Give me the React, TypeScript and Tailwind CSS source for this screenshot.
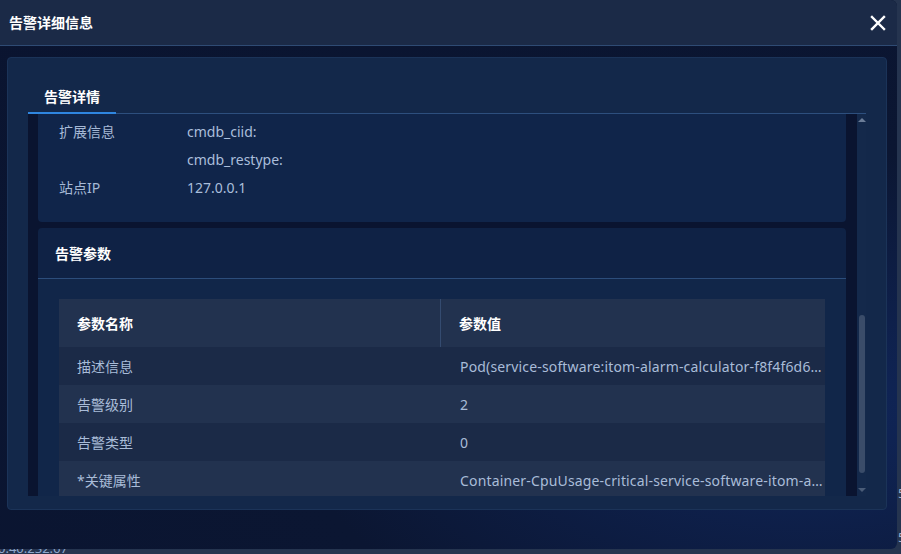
import React from 'react';

const font = { fontFamily: '"Noto Sans", "Noto Sans CJK SC", sans-serif' };

const extRows = [
  { label: '扩展信息', value: 'cmdb_ciid:' },
  { label: '', value: 'cmdb_restype:' },
  { label: '站点IP', value: '127.0.0.1' },
];

const params = [
  { name: '描述信息', value: 'Pod(service-software:itom-alarm-calculator-f8f4f6d6c-7xk2p) CPU usage is too high' },
  { name: '告警级别', value: '2' },
  { name: '告警类型', value: '0' },
  { name: '*关键属性', value: 'Container-CpuUsage-critical-service-software-itom-alarm-calculator' },
  { name: '告警对象', value: 'itom-alarm-calculator' },
];

function CloseIcon() {
  return (
    <svg width="16" height="16" viewBox="0 0 16 16" className="text-white">
      <path d="M2 2 14 14M14 2 2 14" stroke="currentColor" strokeWidth="2.4" strokeLinecap="square" />
    </svg>
  );
}

function Scrollbar() {
  return (
    <div className="flex w-[9px] shrink-0 flex-col items-center bg-[#14294b]">
      <div className="mt-[4px] h-0 w-0 border-x-[4px] border-b-[4px] border-x-transparent border-b-[#6b7d98]" />
      <div className="mt-[193px] h-[158px] w-[6px] rounded-full bg-[#3a4c69]" />
      <div className="mt-[15px] h-0 w-0 border-x-[4px] border-t-[4px] border-x-transparent border-t-[#4a5c78]" />
    </div>
  );
}

export default function App() {
  return (
    <div className="relative h-[554px] w-[901px] overflow-hidden bg-[#25344f]" style={font}>
      <div className="absolute bottom-[-4px] left-[-2px] text-[13px] text-[#8ea6cc]">0.40.232.67</div>
      <div className="absolute left-[898px] top-[485px] flex flex-col gap-[28px] text-[13px] leading-[16px] text-[#9fb2d0]">
        <span>5</span>
        <span>5</span>
      </div>

      <div className="absolute left-0 top-0 flex h-[549px] w-[897px] flex-col overflow-hidden rounded-br-[6px] rounded-tr-[6px] bg-[radial-gradient(ellipse_at_90%_75%,#10265a_0%,#0b1632_45%,#0a1430_100%)]">
        <div className="flex h-[46px] shrink-0 items-center justify-between border-b border-[#2f4b74] bg-[#1b2a47] pl-[9px] pr-[11px]">
          <span className="text-[14px] font-bold text-white">告警详细信息</span>
          <CloseIcon />
        </div>

        <div className="flex min-w-0 flex-1 pb-[39px] pl-[7px] pr-[10px] pt-[11px]">
          <div className="flex min-w-0 flex-1 flex-col rounded-[4px] border border-[#1b3358] bg-[#13284a] px-[20px] pb-[13px] pt-[22px]">
            <div className="flex h-[34px] shrink-0 border-b border-[#2d4f7e]">
              <div className="relative flex w-[88px] items-center justify-center text-[14px] font-semibold text-white">
                告警详情
                <div className="absolute bottom-[-1px] left-0 h-[2px] w-full bg-[#2f86e0]" />
              </div>
            </div>

            <div className="flex h-[382px] min-w-0 shrink-0">
              <div className="flex min-w-0 flex-1 flex-col overflow-hidden bg-[#0a1430] pl-[10px] pr-[11px]">
                <div className="shrink-0 rounded-b-[4px] bg-[#10254a] px-[21px] pb-[21px] pt-[3px]">
                  {extRows.map((r, i) => (
                    <div key={i} className="flex h-[28px] items-center text-[14px]">
                      <span className="w-[128px] text-[#a6b9d5]">{r.label}</span>
                      <span className="text-[#aabedb]">{r.value}</span>
                    </div>
                  ))}
                </div>

                <div className="mt-[6px] shrink-0 rounded-t-[4px] bg-[#0f2245]">
                  <div className="flex h-[51px] items-center border-b border-[#2c4d7b] px-[17px] text-[14px] font-bold text-white">
                    告警参数
                  </div>
                  <div className="bg-[#112649] px-[21px] pt-[20px]">
                    <div className="flex h-[48px] bg-[#22324f] text-[14px] font-bold text-white">
                      <div className="flex w-[382px] shrink-0 items-center border-r border-[#344b70] pl-[18px]">参数名称</div>
                      <div className="flex flex-1 items-center pl-[18px]">参数值</div>
                    </div>
                    {params.map((p, i) => (
                      <div
                        key={p.name}
                        className={`flex h-[38px] text-[14px] text-[#a9bcd8] ${i % 2 === 0 ? 'bg-[#1b2a47]' : 'bg-[#22324f]'}`}
                      >
                        <div className="flex w-[382px] shrink-0 items-center pl-[18px]">{p.name}</div>
                        <div className="flex min-w-0 flex-1 items-center pl-[19px] pr-[2px]">
                          <span className="truncate tracking-[0.16px]">{p.value}</span>
                        </div>
                      </div>
                    ))}
                  </div>
                </div>
              </div>
              <Scrollbar />
            </div>
          </div>
        </div>
      </div>
    </div>
  );
}
